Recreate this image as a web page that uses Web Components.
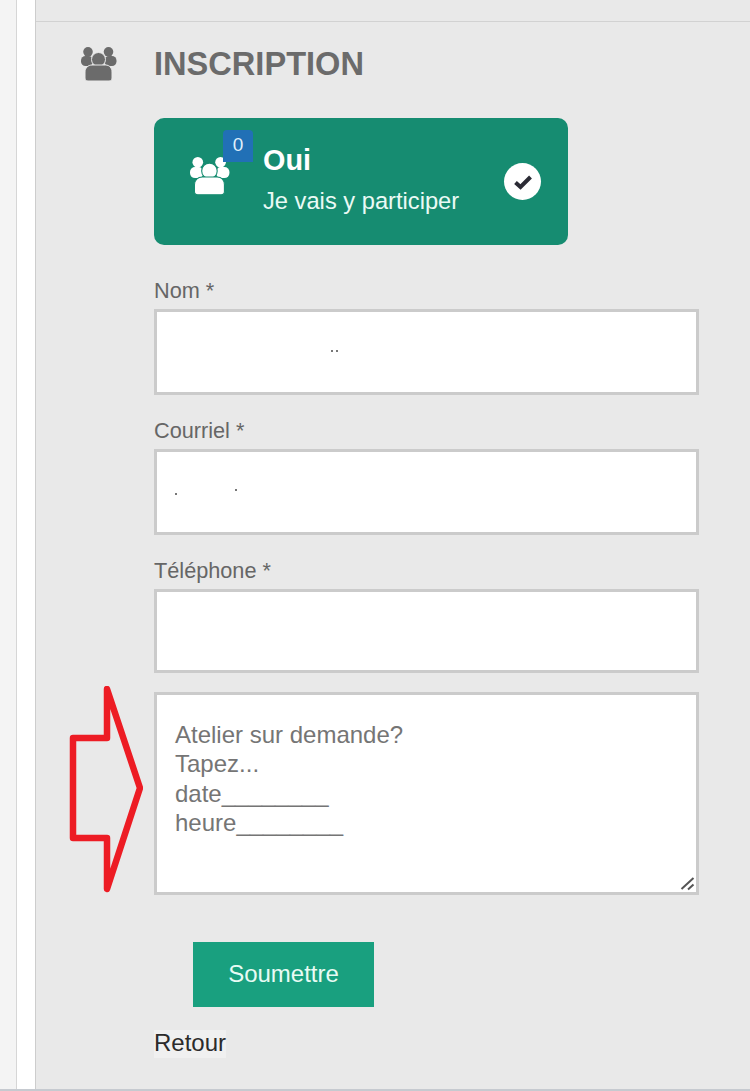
<!DOCTYPE html>
<html lang="fr">
<head>
<meta charset="utf-8">
<title>Inscription</title>
<style>
  html, body { margin: 0; padding: 0; height: 1091px; overflow: hidden; background: #e9e9e9; }
  body { font-family: "Liberation Sans", Arial, sans-serif; }
</style>
</head>
<body>
<page-shell>
  <section-title>INSCRIPTION</section-title>
  <rsvp-card count="0" title="Oui" sub="Je vais y participer"></rsvp-card>
  <form-field label="Nom *" specks="177,41;182,41"></form-field>
  <form-field label="Courriel *" specks="21,44;81,40"></form-field>
  <form-field label="Téléphone *" short></form-field>
  <note-field>Atelier sur demande?
Tapez...
date________
heure________</note-field>
  <submit-button>Soumettre</submit-button>
  <back-link>Retour</back-link>
</page-shell>

<script>
"use strict";

class PeopleIcon extends HTMLElement {
    constructor(){
        super();
        this.attachShadow({mode : 'open'});
        this.shadowRoot.innerHTML = `
            <style>
                :host { display: block; line-height: 0; }
                svg { width: 100%; height: auto; display: block; }
            </style>
            <svg viewBox="0 0 36 34" fill="currentColor">
                <circle cx="7" cy="4.800" r="4.800"/>
                <circle cx="27.500" cy="4.800" r="4.800"/>
                <rect x="0" y="9" width="12" height="10" rx="4.500"/>
                <rect x="23.500" y="9" width="12" height="10" rx="4.500"/>
                <circle cx="17.500" cy="12.500" r="7" stroke="var(--halo)" stroke-width="1"/>
                <path d="M4 25c0-4 3-7 7-7h13.500c4 0 6.500 3 6.500 7v6c0 2-1 3-3 3H7c-2 0-3-1-3-3z" stroke="var(--halo)" stroke-width="1"/>
            </svg>
        `;
    }
}

class SectionTitle extends HTMLElement {
    constructor(){
        super();
        this.attachShadow({mode : 'open'});
        this.shadowRoot.innerHTML = `
            <style>
                :host {
                    display: flex;
                    align-items: center;
                    height: 34px;
                    margin: 25px 0 37px -73px;
                    color: #6b6b6b;
                    --halo: #e9e9e9;
                }
                people-icon { width: 36px; margin-right: 37px; }
                h2 { margin: 0; font-size: 32.600px; font-weight: bold; line-height: 34px; }
            </style>
            <people-icon></people-icon>
            <h2><slot></slot></h2>
        `;
    }
}

class RsvpCard extends HTMLElement {
    constructor(){
        super();
        this.attachShadow({mode : 'open'});
        this.shadowRoot.innerHTML = `
            <style>
                :host {
                    display: flex;
                    position: relative;
                    box-sizing: border-box;
                    width: 414px;
                    height: 127px;
                    padding: 27px 27px 0 36px;
                    margin-bottom: 32px;
                    background: #168c71;
                    border-radius: 10px;
                    color: #fff;
                    --halo: #168c71;
                }
                people-icon { width: 40px; margin-top: 12px; flex: none; }
                .badge {
                    position: absolute;
                    left: 69px;
                    top: 12px;
                    width: 30px;
                    height: 32px;
                    background: #2170b6;
                    border-radius: 4px 4px 0 0;
                    color: #dfeefa;
                    font-size: 19px;
                    line-height: 30px;
                    text-align: center;
                }
                .text { margin-left: 33px; flex: 1; }
                .title { font-size: 28.800px; font-weight: bold; line-height: 30px; }
                .sub { margin-top: 11px; font-size: 23.700px; line-height: 30px; color: #eafaf5; white-space: nowrap; }
                .check {
                    width: 37px;
                    height: 37px;
                    margin-top: 18px;
                    flex: none;
                    border-radius: 50%;
                    background: #fff;
                    display: flex;
                    align-items: center;
                    justify-content: center;
                }
                .check svg { width: 20px; height: 16px; }
            </style>
            <people-icon></people-icon>
            <span class="badge"></span>
            <div class="text">
                <div class="title"></div>
                <div class="sub"></div>
            </div>
            <div class="check">
                <svg viewBox="0 0 20 16"><path d="M2.500 8.500 7.500 13 17.500 3" fill="none" stroke="#2b2b35" stroke-width="4"/></svg>
            </div>
        `;
    }

    connectedCallback(){
        this.shadowRoot.querySelector(".badge").textContent = this.getAttribute("count");
        this.shadowRoot.querySelector(".title").textContent = this.getAttribute("title");
        this.shadowRoot.querySelector(".sub").textContent = this.getAttribute("sub");
    }
}

class FormField extends HTMLElement {
    constructor(){
        super();
        this.attachShadow({mode : 'open'});
        this.shadowRoot.innerHTML = `
            <style>
                :host { display: block; margin-bottom: 22px; }
                :host([short]) { margin-bottom: 19px; }
                label {
                    display: block;
                    height: 28px;
                    margin-bottom: 4px;
                    color: #666;
                    font-size: 21.700px;
                    line-height: 28px;
                }
                .box { position: relative; }
                input {
                    display: block;
                    box-sizing: border-box;
                    width: 545px;
                    height: 86px;
                    border: 3px solid #cbcbcb;
                    background: #fff;
                    outline: none;
                }
                :host([short]) input { height: 84px; }
                i { position: absolute; width: 2px; height: 2px; background: #777; }
            </style>
            <label></label>
            <div class="box"><input type="text"></div>
        `;
    }

    connectedCallback(){
        this.shadowRoot.querySelector("label").textContent = this.getAttribute("label");
        const specks = this.getAttribute("specks");
        if (specks) {
            const box = this.shadowRoot.querySelector(".box");
            specks.split(";").forEach(s => {
                const [x, y] = s.split(",");
                const dot = document.createElement("i");
                dot.style.left = x + "px";
                dot.style.top = y + "px";
                box.appendChild(dot);
            });
        }
    }
}

class NoteField extends HTMLElement {
    constructor(){
        super();
        this.attachShadow({mode : 'open'});
        this.shadowRoot.innerHTML = `
            <style>
                :host { display: block; position: relative; width: 545px; margin-bottom: 47px; }
                textarea {
                    display: block;
                    box-sizing: border-box;
                    width: 545px;
                    height: 203px;
                    padding: 25px 18px;
                    border: 3px solid #cbcbcb;
                    background: #fff;
                    color: #757575;
                    font-family: "Liberation Sans", Arial, sans-serif;
                    font-size: 24px;
                    line-height: 29.300px;
                    outline: none;
                    overflow: hidden;
                    resize: none;
                }
                .arrow { position: absolute; left: -85px; top: -6px; width: 74px; height: 210px; }
                .grip { position: absolute; right: 3px; bottom: 4px; width: 16px; height: 16px; }
            </style>
            <textarea></textarea>
            <svg class="arrow" viewBox="0 0 74 210">
                <path d="M38 3 71 102 38 203V152H4V52H38Z" fill="none" stroke="#ed1c24" stroke-width="6.500" stroke-linejoin="round"/>
            </svg>
            <svg class="grip" viewBox="0 0 16 16">
                <path d="M1.500 14 13.500 3M8 14.500 13.500 9.500" fill="none" stroke="#555" stroke-width="2"/>
            </svg>
        `;
    }

    connectedCallback(){
        this.shadowRoot.querySelector("textarea").textContent = this.textContent;
    }
}

class SubmitButton extends HTMLElement {
    constructor(){
        super();
        this.attachShadow({mode : 'open'});
        this.shadowRoot.innerHTML = `
            <style>
                :host { display: block; margin: 0 0 23px 39px; }
                button {
                    display: block;
                    width: 181px;
                    height: 65px;
                    padding: 0 0 2px;
                    border: 0;
                    background: #19a07f;
                    color: #e8fbf4;
                    font-family: "Liberation Sans", Arial, sans-serif;
                    font-size: 24px;
                }
            </style>
            <button type="button"><slot></slot></button>
        `;
    }
}

class BackLink extends HTMLElement {
    constructor(){
        super();
        this.attachShadow({mode : 'open'});
        this.shadowRoot.innerHTML = `
            <style>
                :host {
                    display: block;
                    width: max-content;
                    height: 28px;
                    background: #f0f0f0;
                    color: #2b2b2b;
                    font-size: 24px;
                    line-height: 26px;
                }
            </style>
            <slot></slot>
        `;
    }
}

class PageShell extends HTMLElement {
    constructor(){
        super();
        this.attachShadow({mode : 'open'});
        this.shadowRoot.innerHTML = `
            <style>
                :host {
                    display: flex;
                    box-sizing: border-box;
                    height: 1091px;
                    border-bottom: 2px solid #c6cad0;
                }
                .gutter { width: 16px; background: #f4f4f4; border-right: 1px solid #d6d6d6; }
                .rail { width: 18px; background: #fff; border-right: 1px solid #cdcdcd; }
                .panel { flex: 1; background: #e9e9e9; }
                .topbar { height: 21px; border-bottom: 1px solid #d2d2d2; }
                .content { padding-left: 118px; }
            </style>
            <div class="gutter"></div>
            <div class="rail"></div>
            <div class="panel">
                <div class="topbar"></div>
                <div class="content"><slot></slot></div>
            </div>
        `;
    }
}

customElements.define("people-icon", PeopleIcon);
customElements.define("section-title", SectionTitle);
customElements.define("rsvp-card", RsvpCard);
customElements.define("form-field", FormField);
customElements.define("note-field", NoteField);
customElements.define("submit-button", SubmitButton);
customElements.define("back-link", BackLink);
customElements.define("page-shell", PageShell);
</script>
</body>
</html>
